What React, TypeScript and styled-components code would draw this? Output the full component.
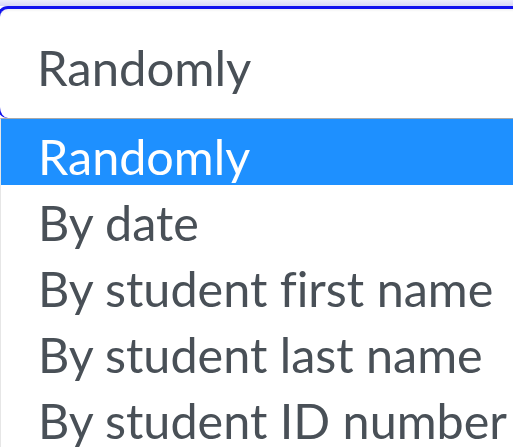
import React from "react";
import styled, { createGlobalStyle } from "styled-components";

const Global = createGlobalStyle`
  html, body { margin: 0; padding: 0; background: #ffffff; overflow: hidden; }
  body {
    font-family: Lato, "Open Sans", sans-serif;
    font-variant-ligatures: none;
    font-feature-settings: "liga" 0, "clig" 0;
  }
`;

const Page = styled.div`
  width: 513px;
  height: 447px;
  display: flex;
  flex-direction: column;
  overflow: hidden;
`;

const TopStrip = styled.div`
  height: 6px;
  flex: none;
  background: linear-gradient(#ececfb, #d6d6f6);
`;

const SelectBox = styled.div`
  flex: none;
  height: 112px;
  margin-left: -3px;
  margin-right: -20px;
  border-top: 3px solid #1010ee;
  border-left: 3px solid #1010ee;
  border-radius: 11px 0 0 11px;
  background: #ffffff;
  box-shadow: inset 0 3px 3px -2px rgba(0, 0, 0, 0.08);
  box-sizing: border-box;
  padding-left: 37px;
  padding-top: 25px;
  font-size: 49px;
  line-height: 66px;
  color: #495057;
`;

const List = styled.ul`
  list-style: none;
  margin: 0;
  padding: 0;
  flex: 1;
  border-top: 1px solid #a8a8a8;
  border-left: 1px solid #e6e6e6;
`;

const Option = styled.li<{ $active?: boolean }>`
  height: 66px;
  box-sizing: border-box;
  padding-left: 37px;
  padding-top: 4px;
  font-size: 48.5px;
  line-height: 66px;
  white-space: nowrap;
  color: ${(p) => (p.$active ? "#ffffff" : "#495057")};
  background: ${(p) => (p.$active ? "#1e90ff" : "transparent")};
`;

const options = [
  "Randomly",
  "By date",
  "By student first name",
  "By student last name",
  "By student ID number",
];

export default function App() {
  return (
    <Page>
      <Global />
      <TopStrip />
      <SelectBox>Randomly</SelectBox>
      <List>
        {options.map((o, i) => (
          <Option key={o} $active={i === 0}>
            {o}
          </Option>
        ))}
      </List>
    </Page>
  );
}
